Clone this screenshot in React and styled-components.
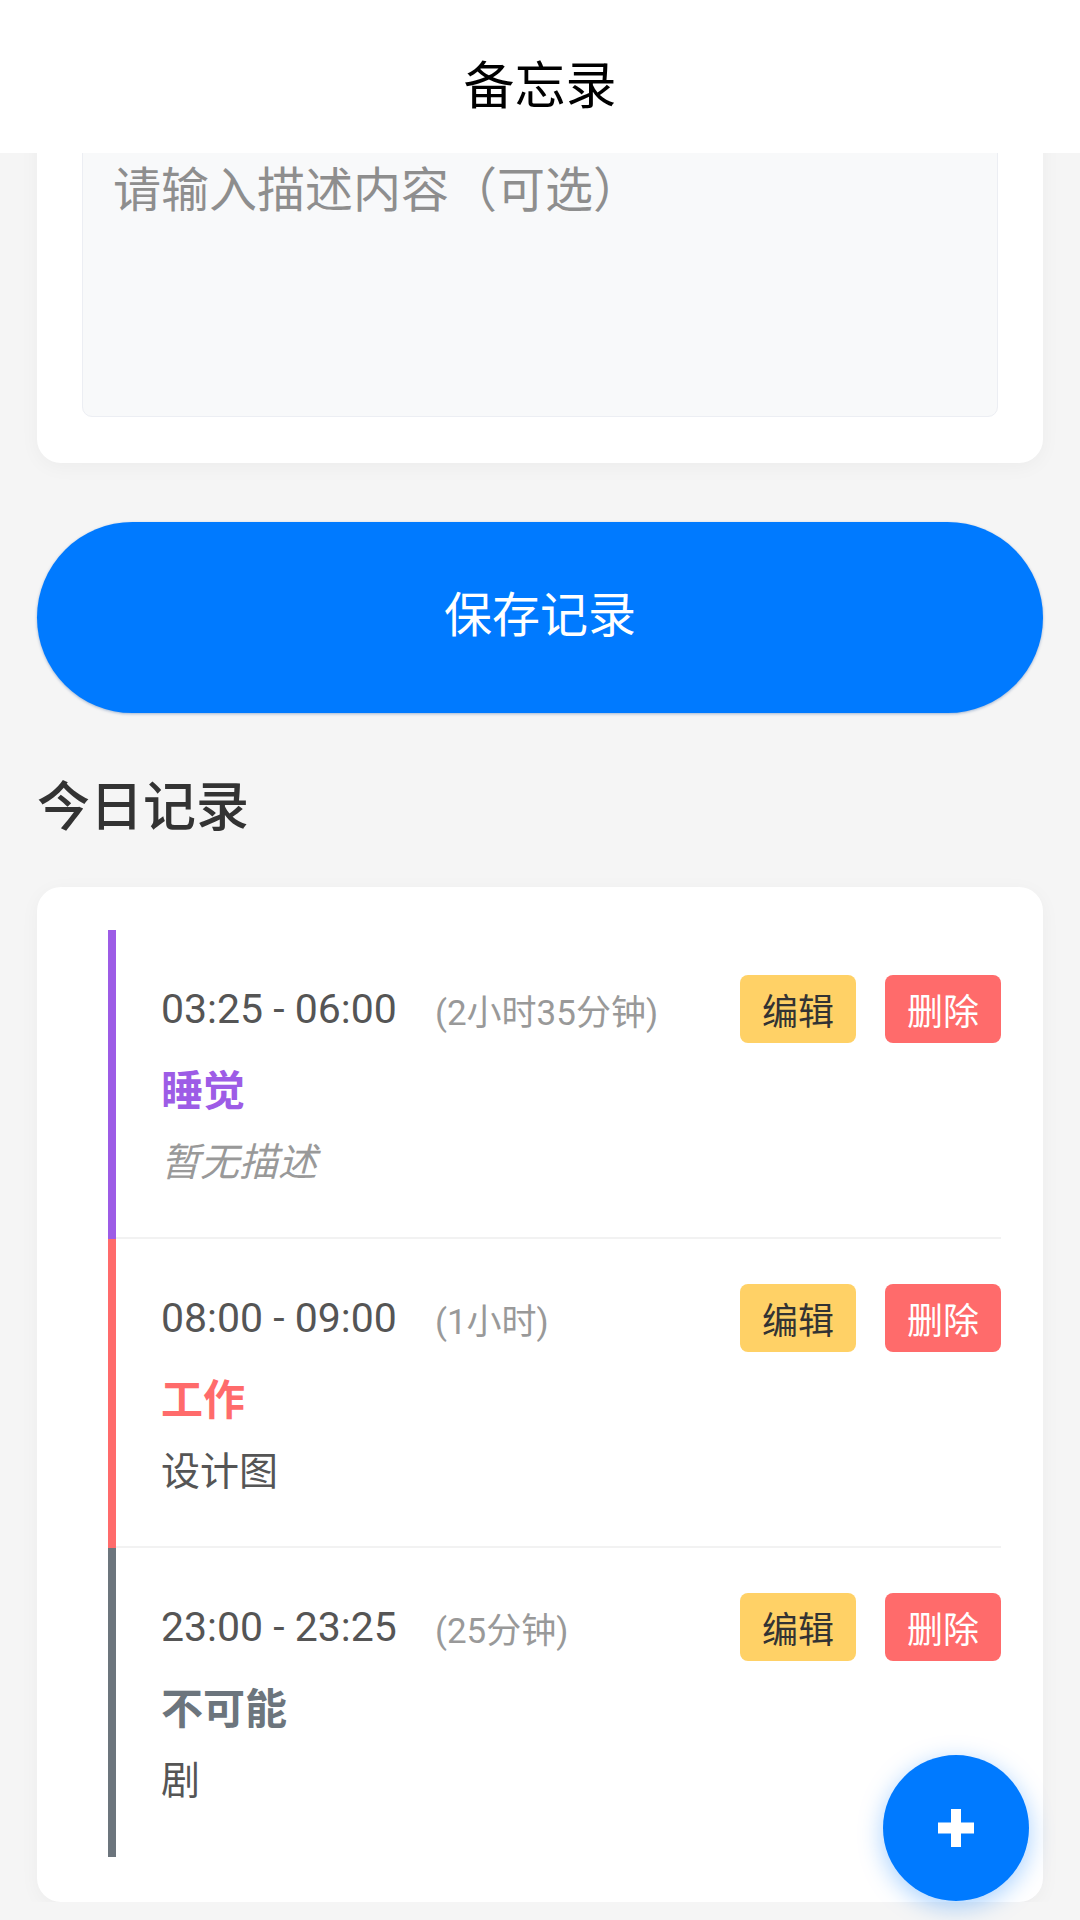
import React from 'react'
import styled, { createGlobalStyle } from 'styled-components'

const records = [
  { start: '03:25', end: '06:00', duration: '2小时35分钟', category: '睡觉', color: '#9D5CE6', desc: '' },
  { start: '08:00', end: '09:00', duration: '1小时', category: '工作', color: '#FF6B6B', desc: '设计图' },
  { start: '23:00', end: '23:25', duration: '25分钟', category: '不可能', color: '#6C757D', desc: '剧' }
]

export default function App() {
  return (
    <>
      <GlobalStyle />
      <Header>
        <Title>备忘录</Title>
      </Header>
      <Main>
        <FormCard>
          <Textarea placeholder="请输入描述内容（可选）" readOnly />
        </FormCard>
        <SaveButton type="button">保存记录</SaveButton>
        <SectionTitle>今日记录</SectionTitle>
        <ListCard>
          {records.map((r, i) => (
            <Item key={i}>
              <Bar $color={r.color} />
              <ItemBody $last={i === records.length - 1}>
                <TopRow>
                  <Time>{r.start} - {r.end}</Time>
                  <Duration>({r.duration})</Duration>
                  <Actions>
                    <ActionButton type="button" $bg="#FFD166" $fg="#333">编辑</ActionButton>
                    <ActionButton type="button" $bg="#FF6B6B" $fg="#fff">删除</ActionButton>
                  </Actions>
                </TopRow>
                <Category $color={r.color}>{r.category}</Category>
                <Desc $empty={!r.desc}>{r.desc || '暂无描述'}</Desc>
              </ItemBody>
            </Item>
          ))}
        </ListCard>
      </Main>
      <Fab type="button" aria-label="添加">
        <svg width="36" height="38" viewBox="0 0 36 38">
          <rect x="0" y="13.5" width="36" height="11" fill="#fff" />
          <rect x="13" y="0" width="10" height="38" fill="#fff" />
        </svg>
      </Fab>
    </>
  )
}

const GlobalStyle = createGlobalStyle`
  html, body {
    margin: 0;
    background: #f5f5f5;
    font-family: Roboto, "Noto Sans CJK SC", sans-serif;
  }
  * {
    box-sizing: border-box;
  }
`

const Header = styled.header`
  position: fixed;
  top: 0;
  left: 0;
  right: 0;
  z-index: 10;
  height: 153px;
  padding-top: 10px;
  display: flex;
  align-items: center;
  justify-content: center;
  background: #fff;
`

const Title = styled.h1`
  margin: 0;
  font-size: 51px;
  font-weight: 400;
  color: #000;
`

const Main = styled.main`
  padding: 77px 37px 0;
`

const FormCard = styled.section`
  background: #fff;
  border-radius: 24px;
  padding: 45px 45px 46px;
  box-shadow: 0 4px 20px rgba(0, 0, 0, 0.04);
`

const Textarea = styled.textarea`
  display: block;
  width: 100%;
  height: 295px;
  padding: 34px 30px 30px;
  border: 1px solid #eceef3;
  border-radius: 10px;
  background: #f8f9fa;
  font-family: inherit;
  font-size: 48px;
  line-height: 1.4;
  resize: none;
  outline: none;

  &::placeholder {
    color: #8e8e8e;
  }
`

const SaveButton = styled.button`
  display: block;
  width: 100%;
  height: 191px;
  margin-top: 59px;
  padding: 0 0 14px;
  border: none;
  border-radius: 96px;
  background: #007aff;
  color: #fff;
  font-family: inherit;
  font-size: 48px;
  box-shadow: 0 1px 3px rgba(0, 60, 140, 0.35);
`

const SectionTitle = styled.h2`
  margin: 57px 0 41px;
  font-size: 53px;
  line-height: 76px;
  font-weight: 500;
  color: #333;
`

const ListCard = styled.section`
  background: #fff;
  border-radius: 24px;
  padding: 43px 42px 45px 71px;
  box-shadow: 0 4px 20px rgba(0, 0, 0, 0.04);
`

const Item = styled.div`
  display: flex;
`

const Bar = styled.div`
  width: 8px;
  flex-shrink: 0;
  background: ${(p) => p.$color};
`

const ItemBody = styled.div`
  flex: 1;
  padding: 45px 0 46px 45px;
  border-bottom: 2px solid ${(p) => (p.$last ? 'transparent' : '#f2f2f2')};
`

const TopRow = styled.div`
  display: flex;
  align-items: center;
  height: 68px;
`

const Time = styled.span`
  font-size: 41px;
  color: #555;
`

const Duration = styled.span`
  margin-left: 38px;
  font-size: 35px;
  color: #999;
`

const Actions = styled.div`
  margin-left: auto;
  display: flex;
  gap: 29px;
`

const ActionButton = styled.button`
  height: 68px;
  padding: 0 22px;
  border: none;
  border-radius: 8px;
  background: ${(p) => p.$bg};
  color: ${(p) => p.$fg};
  font-family: inherit;
  font-size: 36px;
`

const Category = styled.div`
  margin-top: 19px;
  font-size: 42px;
  line-height: 59px;
  font-weight: 700;
  color: ${(p) => p.$color};
`

const Desc = styled.div`
  margin-top: 15px;
  font-size: 39px;
  line-height: 55px;
  color: ${(p) => (p.$empty ? '#999' : '#555')};
  font-style: ${(p) => (p.$empty ? 'italic' : 'normal')};
`

const Fab = styled.button`
  position: fixed;
  right: 51px;
  bottom: 19px;
  width: 146px;
  height: 146px;
  border: none;
  border-radius: 50%;
  background: #007aff;
  display: flex;
  align-items: center;
  justify-content: center;
  box-shadow: 0 6px 24px rgba(0, 122, 255, 0.35);
`
